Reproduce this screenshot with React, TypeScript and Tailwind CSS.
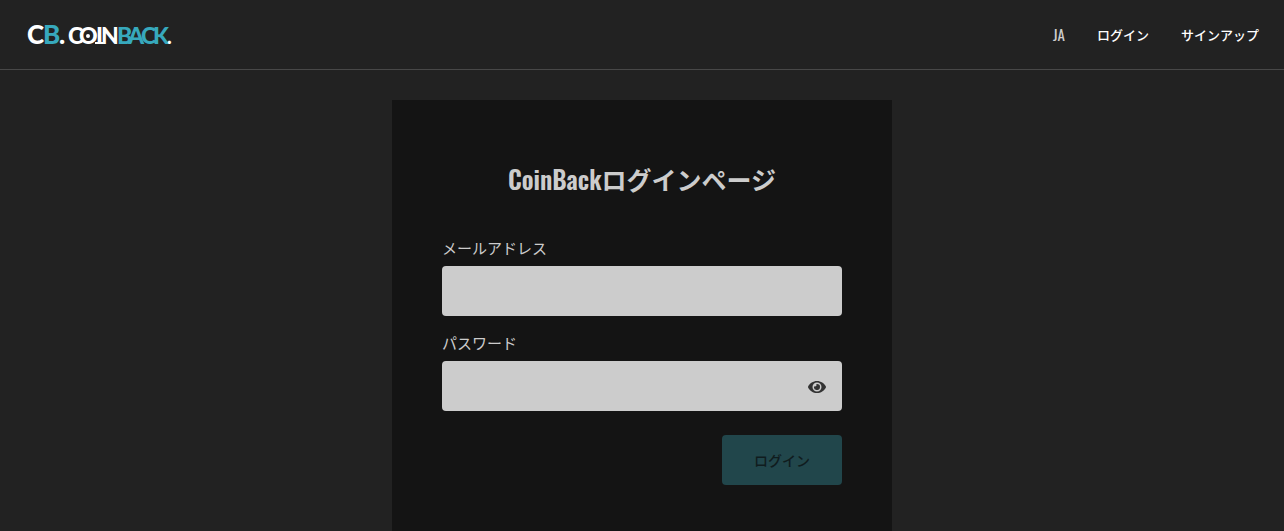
import { useState } from "react";
import type { FormEvent } from "react";
import { FaEye, FaEyeSlash } from "react-icons/fa";

function Logo() {
  return (
    <svg viewBox="0 -11 150 48" className="h-12 w-[150px] overflow-visible" role="img" aria-label="CoinBack">
      <g fontFamily="Lato, 'Liberation Sans', sans-serif" fontWeight="900" fill="#ffffff">
        <text x="2 18 34" y="22" fontSize="26">
          C<tspan fill="#37a9bd">B</tspan>.
        </text>
        <text x="43 54 71 76" y="22" fontSize="23">
          COIN
        </text>
        <text x="92 103 116 128" y="22" fontSize="23" fill="#37a9bd">
          BACK
        </text>
        <text x="142" y="22" fontSize="20">
          .
        </text>
      </g>
      <circle cx="63" cy="14" r="2" fill="#ffffff" />
      <path d="M70 21h8" stroke="#ffffff" strokeWidth="2" />
    </svg>
  );
}

function Header() {
  return (
    <header className="flex h-[70px] items-center justify-between border-b border-[#484848] px-[25px]">
      <a href="#home">
        <Logo />
      </a>
      <nav className="flex items-center gap-8 text-[13px] font-medium text-white">
        <button type="button" className="text-[15px] font-normal text-[#cccccc]">
          JA
        </button>
        <a href="#login">ログイン</a>
        <a href="#signup">サインアップ</a>
      </nav>
    </header>
  );
}

export default function App() {
  const [visible, setVisible] = useState(false);
  const submit = (event: FormEvent) => event.preventDefault();

  return (
    <div className="flex min-h-screen flex-col bg-[#222222] font-['Oswald','Liberation_Sans_Narrow','Noto_Sans_CJK_JP',sans-serif] text-[#cccccc]">
      <Header />
      <main className="flex flex-1 flex-col items-center pt-[30px]">
        <section className="w-full max-w-[500px] flex-1 bg-[#141414] px-[50px] pt-[60px] pb-[46px]">
          <h1 className="text-center text-[25px] leading-[38px] font-semibold">CoinBackログインページ</h1>
          <form onSubmit={submit} className="mt-[38px] flex flex-col">
            <label htmlFor="email" className="mb-2 text-[15px] leading-[22px]">
              メールアドレス
            </label>
            <input id="email" type="email" className="h-[50px] w-full rounded bg-[#cccccc] px-4 text-[#222222]" />
            <label htmlFor="password" className="mt-[15px] mb-2 text-[15px] leading-[22px]">
              パスワード
            </label>
            <div className="flex h-[50px] items-center rounded bg-[#cccccc] pr-4">
              <input
                id="password"
                type={visible ? "text" : "password"}
                className="h-full min-w-0 flex-1 rounded bg-transparent px-4 text-[#222222]"
              />
              <button
                type="button"
                aria-label="パスワードを表示"
                onClick={() => setVisible(!visible)}
                className="pt-0.5 text-lg text-[#333333]"
              >
                {visible ? <FaEyeSlash /> : <FaEye />}
              </button>
            </div>
            <button
              type="submit"
              className="mt-6 h-[50px] w-[120px] self-end rounded bg-[#21464b] text-sm font-medium text-[#101c1e]"
            >
              ログイン
            </button>
          </form>
        </section>
      </main>
    </div>
  );
}
